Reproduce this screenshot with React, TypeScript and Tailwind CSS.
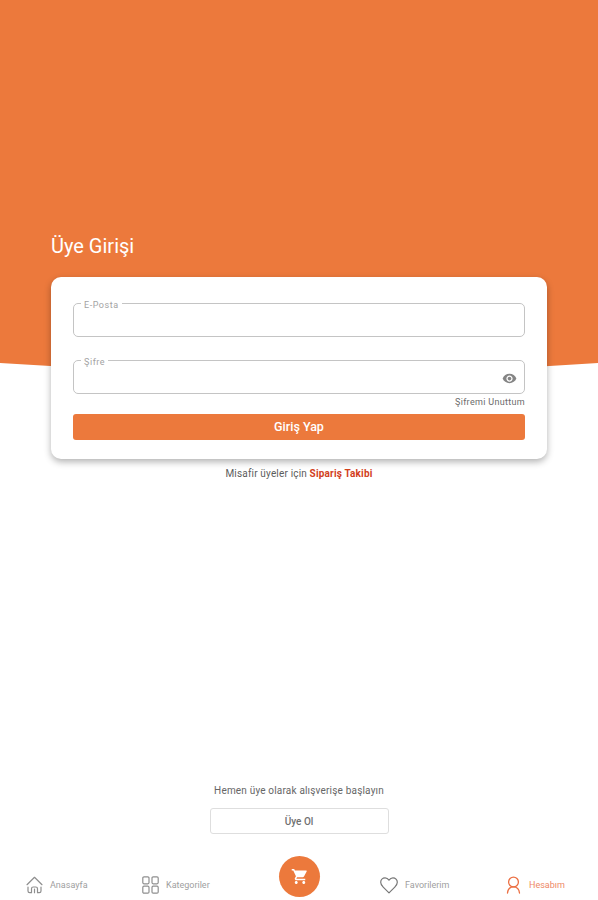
import React, { useState } from 'react';

export default function App() {
    return (
        <div className="w-[598px] h-[900px] flex flex-col bg-white overflow-hidden font-['Roboto',sans-serif]">
            <header className="shrink-0">
                <div className="h-[363px] bg-[#EC793C] pt-[232px] pl-[51px]">
                    <h1 className="text-[20px] leading-[28px] text-white">Üye Girişi</h1>
                </div>
                <svg className="block w-full h-[10px]" viewBox="0 0 598 10" preserveAspectRatio="none">
                    <path d="M0 0Q299 20 598 0Z" fill="#EC793C" />
                </svg>
            </header>

            <main className="relative -mt-[96px] flex-1 flex flex-col items-center">
                <form className="w-[496px] h-[182px] px-[22px] pt-[18px] bg-white rounded-[10px] shadow-[0_3px_7px_rgba(0,0,0,0.3)] flex flex-col">
                    <Field label="E-Posta" type="email" />
                    <div className="h-[15px] shrink-0" />
                    <Field label="Şifre" type="password" />
                    <a className="mt-[1px] self-end text-[9px] leading-[14px] tracking-[0.32px] text-[#6b6b6b]">Şifremi Unuttum</a>
                    <button type="button" className="mt-[5px] h-[26px] shrink-0 rounded-[3px] bg-[#EC793C] text-[12.5px] font-medium text-white">
                        Giriş Yap
                    </button>
                </form>

                <p className="mt-[8px] text-[10px] leading-[14px] tracking-[0.17px] text-[#5c5c5c]">
                    Misafir üyeler için <a className="font-bold text-[#d2401c]">Sipariş Takibi</a>
                </p>

                <p className="mt-auto text-[10px] leading-[14px] tracking-[0.18px] text-[#666]">Hemen üye olarak alışverişe başlayın</p>
                <button type="button" className="mt-[10px] mb-[9px] w-[179px] h-[26px] shrink-0 rounded-[3px] border border-[#dedede] text-[10px] font-medium text-[#707070]">
                    Üye Ol
                </button>
            </main>

            <nav className="h-[57px] shrink-0 flex items-end text-[9px]">
                <NavItem label="Anasayfa" icon={<HomeIcon />} className="pl-[26px] w-[116px] text-[#a0a0a0]" />
                <NavItem label="Kategoriler" icon={<GridIcon />} className="pl-[26px] w-[163px] text-[#a0a0a0]" />
                <button type="button" className="w-[41px] h-[41px] mb-[3px] shrink-0 rounded-full bg-[#EC793C] flex items-center justify-center">
                    <CartIcon />
                </button>
                <NavItem label="Favorilerim" icon={<HeartIcon />} className="pl-[60px] w-[186px] text-[#a0a0a0]" />
                <NavItem label="Hesabım" icon={<UserIcon />} className="text-[#ee8966]" />
            </nav>
        </div>
    );
}

function Field({ label, type }: { label: string, type: string }) {
    const [visible, setVisible] = useState(false);

    return (
        <fieldset className="w-[452px] h-[42px] shrink-0 min-w-0 rounded-[5px] border border-[#c4c4c4] pl-[7px] pr-[7px] flex">
            <legend className="px-[3px] pt-[5px] text-[9px] leading-[11px] tracking-[0.55px] text-[#a3a3a3]">{label}</legend>
            <div className="flex h-[20px] w-full items-center">
                <input type={visible ? 'text' : type} aria-label={label} className="flex-1 min-w-0 text-[12px] outline-none" />
                {type === 'password' && (
                    <button type="button" onClick={() => setVisible(!visible)} aria-label="Şifreyi göster">
                        <EyeIcon />
                    </button>
                )}
            </div>
        </fieldset>
    );
}

function NavItem({ icon, label, className }: { icon: React.ReactNode, label: string, className: string }) {
    return (
        <a className={`flex h-[30px] items-center gap-[7px] ${className}`}>
            {icon}
            <span className="pt-px">{label}</span>
        </a>
    );
}

function EyeIcon() {
    return (
        <svg className="w-[15px] h-[15px]" viewBox="0 0 24 24" fill="#858585">
            <path d="M12 4.5C7 4.5 2.73 7.61 1 12c1.73 4.39 6 7.5 11 7.5s9.27-3.11 11-7.5c-1.73-4.39-6-7.5-11-7.5zM12 17c-2.76 0-5-2.24-5-5s2.24-5 5-5 5 2.24 5 5-2.24 5-5 5zm0-8c-1.66 0-3 1.34-3 3s1.34 3 3 3 3-1.34 3-3-1.34-3-3-3z" />
        </svg>
    );
}

function HomeIcon() {
    return (
        <svg className="w-[17px] h-[18px]" viewBox="0 0 17 18" fill="none" stroke="#8f8f8f" strokeWidth="1.2" strokeLinecap="round" strokeLinejoin="round">
            <path d="M1 8.7 8.5 1.3 16 8.7" />
            <path d="M2 11v4q0 1.7 1.7 1.7h1.8v-4q0-1.7 1.7-1.7h2.6q1.7 0 1.7 1.7v4h1.8q1.7 0 1.7-1.7v-4M8.5 13v3.7" />
        </svg>
    );
}

function GridIcon() {
    return (
        <svg className="w-[17px] h-[18px]" viewBox="0 0 17 18" fill="none" stroke="#8f8f8f" strokeWidth="1.2">
            <rect x="0.8" y="0.8" width="6.2" height="7" rx="1.2" />
            <rect x="10" y="0.8" width="6.2" height="7" rx="1.2" />
            <rect x="0.8" y="10.2" width="6.2" height="7" rx="1.2" />
            <rect x="10" y="10.2" width="6.2" height="7" rx="1.2" />
        </svg>
    );
}

function CartIcon() {
    return (
        <svg className="w-[18px] h-[19px]" viewBox="0 0 24 24" fill="white">
            <path d="M7 18c-1.1 0-1.99.9-1.99 2S5.9 22 7 22s2-.9 2-2-.9-2-2-2zM1 2v2h2l3.6 7.59-1.35 2.45c-.16.28-.25.61-.25.96 0 1.1.9 2 2 2h12v-2H7.42c-.14 0-.25-.11-.25-.25l.03-.12.9-1.63h7.45c.75 0 1.41-.41 1.75-1.03l3.58-6.49A1 1 0 0 0 20 4H5.21l-.94-2H1zm16 16c-1.1 0-1.99.9-1.99 2s.89 2 1.99 2 2-.9 2-2-.9-2-2-2z" />
        </svg>
    );
}

function HeartIcon() {
    return (
        <svg className="w-[18px] h-[17px]" viewBox="0 0 18 17" fill="none" stroke="#777" strokeWidth="1.2" strokeLinejoin="round">
            <path d="M9 3.2C7.8 1.5 6.5.9 5.1.9 2.6.9.7 2.8.7 5.3c0 2.1 1 3.3 2.5 4.8L9 15.9l5.8-5.8c1.5-1.5 2.5-2.7 2.5-4.8C17.3 2.8 15.4.9 12.9.9 11.500.9 10.2 1.5 9 3.2z" />
        </svg>
    );
}

function UserIcon() {
    return (
        <svg className="w-[15px] h-[18px] mr-px" viewBox="0 0 14 18" fill="none" stroke="#ec6f42" strokeWidth="1.3" strokeLinecap="round">
            <circle cx="7" cy="6" r="4.9" />
            <path d="M1 17c.4-3.6 2.6-6.100 6-6.100s5.600 2.500 6 6.100" />
        </svg>
    );
}
